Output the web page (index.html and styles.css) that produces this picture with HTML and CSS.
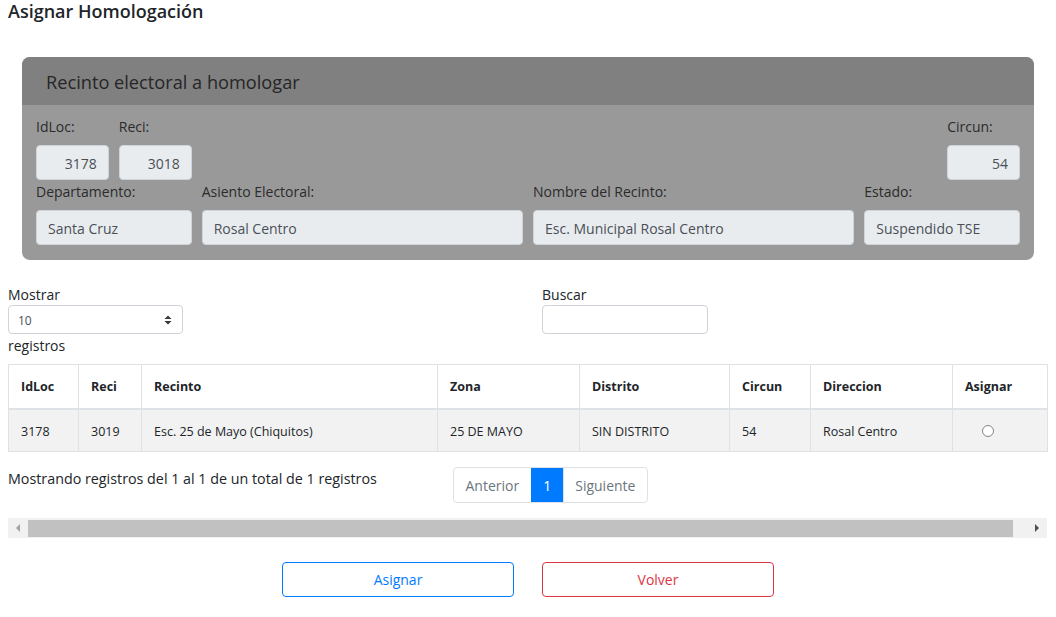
FILE: index.html
```html
<!DOCTYPE html>
<html lang="es">
<head>
<meta charset="utf-8">
<title>Asignar Homologación</title>
<link rel="stylesheet" href="styles.css">
</head>
<body>
<h1 class="title">Asignar Homologación</h1>

<div class="card">
  <div class="card-header">Recinto electoral a homologar</div>
  <div class="card-body">
    <div class="form-grid">
      <div class="fg span1"><label class="lbl">IdLoc:</label><div class="inp num">3178</div></div>
      <div class="fg span1"><label class="lbl">Reci:</label><div class="inp num">3018</div></div>
      <div class="fg span1 last"><label class="lbl">Circun:</label><div class="inp num">54</div></div>

      <div class="fg span2"><label class="lbl">Departamento:</label><div class="inp">Santa Cruz</div></div>
      <div class="fg span4"><label class="lbl">Asiento Electoral:</label><div class="inp">Rosal Centro</div></div>
      <div class="fg span4"><label class="lbl">Nombre del Recinto:</label><div class="inp">Esc. Municipal Rosal Centro</div></div>
      <div class="fg span2"><label class="lbl">Estado:</label><div class="inp">Suspendido TSE</div></div>
    </div>
  </div>
</div>

<div class="controls">
  <div class="ctl-left">
    <div class="ctl-lbl">Mostrar</div>
    <div class="select">
      <span>10</span>
      <svg class="sel-arrow" width="8" height="10" viewBox="0 0 8 10"><path d="M4 0.5 L7.5 4 L0.5 4 Z M4 9.5 L7.5 6 L0.5 6 Z" fill="#343a40"/></svg>
    </div>
    <div class="ctl-lbl">registros</div>
  </div>
  <div class="ctl-right">
    <div class="ctl-lbl">Buscar</div>
    <div class="search"></div>
  </div>
</div>

<table class="tbl">
  <colgroup>
    <col class="w1"><col class="w2"><col class="w3"><col class="w4"><col class="w5"><col class="w6"><col class="w7"><col class="w8">
  </colgroup>
  <thead>
    <tr><th>IdLoc</th><th>Reci</th><th>Recinto</th><th>Zona</th><th>Distrito</th><th>Circun</th><th>Direccion</th><th>Asignar</th></tr>
  </thead>
  <tbody>
    <tr><td>3178</td><td>3019</td><td>Esc. 25 de Mayo (Chiquitos)</td><td>25 DE MAYO</td><td>SIN DISTRITO</td><td>54</td><td>Rosal Centro</td><td class="radio-cell"><span class="radio"></span></td></tr>
  </tbody>
</table>

<div class="footer-row">
  <div class="info">Mostrando registros del 1 al 1 de un total de 1 registros</div>
  <div class="pager">
    <span class="pg">Anterior</span><span class="pg active">1</span><span class="pg">Siguiente</span>
  </div>
</div>

<div class="hscroll">
  <svg class="arr" width="20" height="20" viewBox="0 0 20 20"><path d="M8 10 L12 6 L12 14 Z" fill="#a3a3a3"/></svg>
  <div class="thumb"></div>
  <svg class="arr" width="20" height="20" viewBox="0 0 20 20"><path d="M12 10 L8 6 L8 14 Z" fill="#505050"/></svg>
</div>

<div class="actions">
  <button class="btn btn-blue">Asignar</button>
  <button class="btn btn-red">Volver</button>
</div>
</body>
</html>
```

FILE: styles.css
```css
* { box-sizing: border-box; }
html, body { margin: 0; padding: 0; }
body {
  padding: 0 8px;
  font-family: "Open Sans", "Noto Sans", "Liberation Sans", sans-serif;
  font-size: 14px;
  color: #212529;
  background: #fff;
}
.title {
  margin: 0;
  font-size: 18px;
  font-weight: 600;
  line-height: 22px;
  color: #212529;
}
.card {
  margin: 35px 14px 0;
  border-radius: 8px;
  overflow: hidden;
  background: #999999;
}
.card-header {
  background: #808080;
  height: 48px;
  padding: 0 24px;
  display: flex;
  align-items: center;
  padding-top: 1px;
  font-size: 18.2px;
  font-weight: 500;
  color: #262626;
}
.card-body { padding: 10px 14px 15px; }
.form-grid {
  display: grid;
  grid-template-columns: repeat(12, 1fr);
  column-gap: 10px;
}
.span1 { grid-column: span 1; }
.span2 { grid-column: span 2; }
.span4 { grid-column: span 4; }
.last { grid-column: 12 / span 1; }
.lbl {
  display: block;
  line-height: 24px;
  margin-bottom: 6px;
  color: #2b2b2b;
  font-size: 14px;
}
.inp {
  height: 35px;
  background: #e9ecef;
  border: 1px solid #ced4da;
  border-radius: 4px;
  padding: 1px 11px 0;
  display: flex;
  align-items: center;
  color: #495057;
  font-size: 14px;
  white-space: nowrap;
}
.inp.num { justify-content: flex-end; }

.controls {
  display: grid;
  grid-template-columns: 534px 1fr;
  margin-top: 24px;
}
.ctl-lbl { line-height: 21px; font-size: 14px; }
.select {
  width: 175px;
  height: 29px;
  border: 1px solid #ced4da;
  border-radius: 4px;
  display: flex;
  align-items: center;
  justify-content: space-between;
  padding: 1px 10px 0 9px;
  font-size: 12px;
  color: #495057;
  margin-bottom: 1px;
}
.search {
  width: 166px;
  height: 29px;
  border: 1px solid #ced4da;
  border-radius: 4px;
}

.tbl {
  margin-top: 8px;
  width: 1040px;
  border-collapse: collapse;
  table-layout: fixed;
  font-size: 12.5px;
}
.w1 { width: 70px; } .w2 { width: 63px; } .w3 { width: 296px; } .w4 { width: 142px; }
.w5 { width: 150px; } .w6 { width: 81px; } .w7 { width: 142px; } .w8 { width: 95px; }
.tbl th, .tbl td {
  border: 1px solid #dee2e6;
  padding: 0 12px;
  text-align: left;
  white-space: nowrap;
}
.tbl th {
  height: 44px;
  padding-top: 1px;
  font-weight: 700;
  border-bottom: 2px solid #dee2e6;
  color: #212529;
}
.tbl td {
  height: 43px;
  padding-top: 2px;
  background: #f2f2f2;
  color: #212529;
}
.tbl td.radio-cell { padding-left: 29px; }
.radio {
  display: block;
  width: 12px;
  height: 12px;
  border: 1px solid #858585;
  border-radius: 50%;
  background: #fff;
}

.footer-row {
  display: flex;
  align-items: flex-start;
  margin-top: 15px;
}
.info { width: 445px; line-height: 24px; font-size: 14.3px; }
.pager {
  display: flex;
  height: 36px;
  border: 1px solid #dee2e6;
  border-radius: 4px;
  overflow: hidden;
}
.pg {
  display: flex;
  align-items: center;
  padding: 1px 11.5px 0;
  color: #6c757d;
  font-size: 14px;
}
.pg + .pg { border-left: 1px solid #dee2e6; }
.pg.active { background: #007bff; color: #fff; border-color: #007bff; }

.hscroll {
  margin-top: 15px;
  width: 1039px;
  height: 20px;
  background: #f1f1f1;
  display: flex;
  align-items: center;
}
.hscroll .arr { flex: none; }
.thumb {
  flex: 1;
  height: 17px;
  margin-right: 14px;
  background: #c1c1c1;
}

.actions {
  display: flex;
  justify-content: center;
  gap: 28px;
  margin-top: 24px;
}
.btn {
  width: 232px;
  height: 35px;
  background: #fff;
  border-radius: 4px;
  font-family: inherit;
  font-size: 14px;
  padding-top: 1px;
  cursor: pointer;
}
.btn-blue { border: 1px solid #007bff; color: #007bff; }
.btn-red { border: 1px solid #dc3545; color: #dc3545; }
```
